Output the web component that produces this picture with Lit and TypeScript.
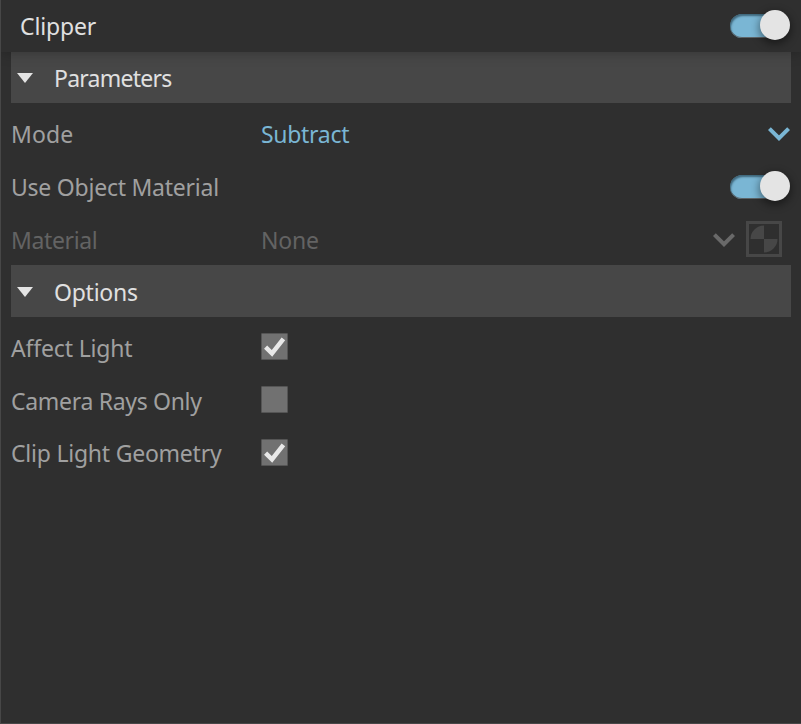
import { LitElement, html, css, svg, nothing } from "lit";
import { customElement, property } from "lit/decorators.js";

@customElement("toggle-switch")
class ToggleSwitch extends LitElement {
  static styles = css`
    :host { display: block; width: 60px; height: 30px; }
    .track {
      position: relative; box-sizing: border-box; width: 58px; height: 24px; top: 4px;
      border-radius: 12px; background: #7ab6d4;
      box-shadow: inset 1px 2px 2px rgba(30, 60, 75, 0.65), inset 0 -1px 0 #5d6366;
    }
    .knob {
      position: absolute; left: 30px; top: -4px; width: 30px; height: 30px;
      border-radius: 50%; background: #e4e4e4;
      box-shadow: 0 3px 8px 1px rgba(0, 0, 0, 0.45);
    }
  `;
  render() {
    return html`<div class="track"><div class="knob"></div></div>`;
  }
}

@customElement("check-box")
class CheckBox extends LitElement {
  @property({ type: Boolean }) checked = false;
  static styles = css`
    :host { display: block; width: 27px; height: 27px; }
    .box {
      box-sizing: border-box; width: 27px; height: 27px; background: #717171;
      border: 1px solid #555; border-radius: 1px;
    }
    svg { display: block; }
  `;
  render() {
    return html`<div class="box">
      <svg width="25" height="25" viewBox="0 0 25 25">
        ${this.checked
          ? svg`<path d="M3.6 13.2 L10 19.4 L21.4 4.8" fill="none" stroke="#e8e8e8" stroke-width="4.5"/>`
          : nothing}
      </svg>
    </div>`;
  }
}

@customElement("app-root")
class AppRoot extends LitElement {
  static styles = css`
    :host {
      display: flex; flex-direction: column; box-sizing: border-box;
      width: 801px; height: 724px; overflow: hidden;
      background: #2f2f2f; border-left: 1px solid #474747; border-bottom: 1px solid #474747;
      font: 23px/32px "Noto Sans", "Open Sans", sans-serif; color: #a0a0a0;
    }
    svg { display: block; flex: none; }
    span { white-space: nowrap; }
    .title {
      display: flex; align-items: center; justify-content: space-between;
      box-sizing: border-box; height: 52px; flex: none; padding: 0 11px 2px 19px;
      color: #e0e0e0; background: #2f2f2f; box-shadow: 0 1px 12px rgba(0, 0, 0, 0.25); z-index: 1;
    }
    .title span { padding-top: 2px; }
    .section {
      display: flex; align-items: center; box-sizing: border-box; height: 52px; flex: none;
      margin: 0 10px; padding-left: 6px; gap: 21px; background: #474747; color: #e0e0e0;
    }
    .section.first { height: 51px; }
    .section span { padding-top: 1px; }
    .section svg { padding-top: 1px; }
    .rows { padding: 3px 11px 0 10px; }
    .row { display: grid; grid-template-columns: 250px 1fr auto; align-items: center; height: 53px; }
    .row span { padding-top: 3px; }
    .row.last span { padding-top: 1px; }
    .row.disabled { color: #636363; }
    .chevron { padding-top: 2px; }
    .accent { color: #7ab6d4; }
    .tools { display: flex; align-items: center; gap: 11px; padding-right: 8px; }
  `;

  private label(text: string, spacing: number, cls = "") {
    return html`<span class=${cls} style="letter-spacing:${spacing}px">${text}</span>`;
  }

  private arrow() {
    return html`<svg width="16" height="10" viewBox="0 0 16 10"><path d="M0 0H16L8 10Z" fill="#e4e4e4"/></svg>`;
  }

  private chevron(color: string) {
    return html`<svg class="chevron" width="22" height="14" viewBox="0 0 22 14">
      <path d="M1.4 1.6 L11 11.2 L20.6 1.6" fill="none" stroke=${color} stroke-width="4"/>
    </svg>`;
  }

  render() {
    return html`
      <div class="title">${this.label("Clipper", -0.15)}<toggle-switch></toggle-switch></div>
      <div class="section first">${this.arrow()}${this.label("Parameters", -0.75)}</div>
      <div class="rows">
        <div class="row">
          ${this.label("Mode", 0.1)}${this.label("Subtract", -0.3, "accent")}${this.chevron("#7ab6d4")}
        </div>
        <div class="row">
          ${this.label("Use Object Material", -0.24)}<i></i><toggle-switch></toggle-switch>
        </div>
        <div class="row disabled">
          ${this.label("Material", -0.38)}${this.label("None", -0.2)}
          <div class="tools">
            ${this.chevron("#696969")}
            <svg width="36" height="36" viewBox="0 0 36 36">
              <rect x="1.5" y="1.5" width="33" height="33" fill="none" stroke="#474747" stroke-width="3"/>
              <path d="M18 18V4.5A13.5 13.5 0 0 0 4.5 18ZM18 18V31.5A13.5 13.5 0 0 0 31.5 18Z" fill="#474747"/>
            </svg>
          </div>
        </div>
      </div>
      <div class="section">${this.arrow()}${this.label("Options", -0.25)}</div>
      <div class="rows">
        <div class="row">${this.label("Affect Light", -0.17)}<check-box checked></check-box></div>
        <div class="row">${this.label("Camera Rays Only", -0.31)}<check-box></check-box></div>
        <div class="row last">${this.label("Clip Light Geometry", -0.23)}<check-box checked></check-box></div>
      </div>
    `;
  }
}
